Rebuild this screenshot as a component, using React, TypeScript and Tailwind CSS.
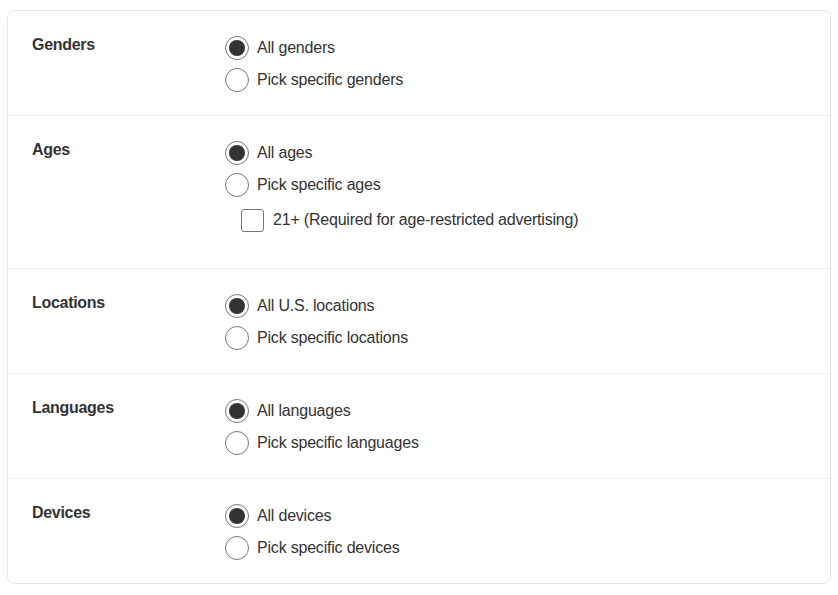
import { useState } from "react";

type Section = {
  key: string;
  label: string;
  all: string;
  pick: string;
  extra?: string;
};

const sections: Section[] = [
  { key: "genders", label: "Genders", all: "All genders", pick: "Pick specific genders" },
  {
    key: "ages",
    label: "Ages",
    all: "All ages",
    pick: "Pick specific ages",
    extra: "21+ (Required for age-restricted advertising)",
  },
  { key: "locations", label: "Locations", all: "All U.S. locations", pick: "Pick specific locations" },
  { key: "languages", label: "Languages", all: "All languages", pick: "Pick specific languages" },
  { key: "devices", label: "Devices", all: "All devices", pick: "Pick specific devices" },
];

function Radio({ checked }: { checked: boolean }) {
  return (
    <span className="flex h-6 w-6 shrink-0 items-center justify-center rounded-full border border-[#767676] bg-white">
      {checked && <span className="h-[16px] w-[16px] rounded-full bg-[#333333]" />}
    </span>
  );
}

export default function App() {
  const [values, setValues] = useState<Record<string, string>>({
    genders: "all",
    ages: "all",
    locations: "all",
    languages: "all",
    devices: "all",
  });
  const [restricted, setRestricted] = useState(false);

  return (
    <main
      className="min-h-screen bg-white px-[7px] pt-[10px] text-[#333333]"
      style={{ fontFamily: '"Liberation Sans", Arial, sans-serif' }}
    >
      <div className="overflow-hidden rounded-lg border border-[#e6e6e6]">
        {sections.map((section, i) => (
          <div
            key={section.key}
            className={`flex px-6 pt-[21px] ${section.extra ? "pb-[32px]" : "pb-[19px]"} ${
              i > 0 ? "border-t border-[#efefef]" : ""
            }`}
          >
            <div className="w-[193px] shrink-0 pt-[1px] text-base font-bold leading-6 tracking-[-0.3px]">
              {section.label}
            </div>

            <div className="flex flex-col tracking-[-0.2px]">
              {(["all", "pick"] as const).map((opt) => (
                <button
                  key={opt}
                  type="button"
                  onClick={() => setValues({ ...values, [section.key]: opt })}
                  className="flex h-8 items-center gap-2 text-left text-base"
                >
                  <Radio checked={values[section.key] === opt} />
                  <span>{opt === "all" ? section.all : section.pick}</span>
                </button>
              ))}

              {section.extra && (
                <button
                  type="button"
                  onClick={() => setRestricted(!restricted)}
                  className="ml-4 mt-[3px] flex h-8 items-center gap-[9px] text-left text-base"
                >
                  <span className="flex h-[23px] w-[23px] shrink-0 items-center justify-center rounded-[3px] border border-[#767676] bg-white">
                    {restricted && <span className="h-3 w-3 bg-[#333333]" />}
                  </span>
                  <span>{section.extra}</span>
                </button>
              )}
            </div>
          </div>
        ))}
      </div>
    </main>
  );
}
